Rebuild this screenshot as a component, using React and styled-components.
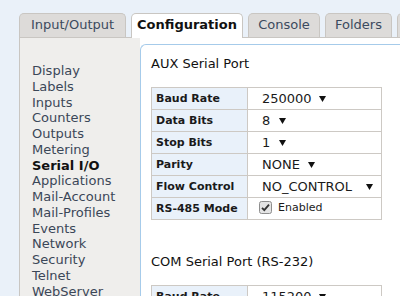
import React from 'react';
import styled, { createGlobalStyle } from 'styled-components';

const Global = createGlobalStyle`
  html, body { margin: 0; padding: 0; background: #eaf1f9; overflow: hidden; }
  body { width: 400px; height: 296px; font-family: "DejaVu Sans", Verdana, sans-serif; }
`;

const Page = styled.div`
  padding: 13px 0 0 19px;
  width: 440px;
`;

const TabBar = styled.div`
  display: flex;
  align-items: flex-end;
  gap: 5px;
  height: 24px;
`;

const Tab = styled.div`
  box-sizing: border-box;
  flex: none;
  width: ${p => p.$w}px;
  height: ${p => (p.$active ? 25 : 24)}px;
  margin-bottom: ${p => (p.$active ? -1 : 0)}px;
  position: ${p => (p.$active ? 'relative' : 'static')};
  z-index: ${p => (p.$active ? 1 : 0)};
  border: 1px solid #c9c6c2;
  border-bottom: none;
  border-radius: 5px 5px 0 0;
  background: ${p => (p.$active ? '#ffffff' : '#dddbd9')};
  color: ${p => (p.$active ? '#111111' : '#3b4a5e')};
  font-weight: ${p => (p.$active ? 'bold' : 'normal')};
  font-size: 13px;
  line-height: 22px;
  text-align: center;
  white-space: nowrap;
  overflow: hidden;
`;

const Body = styled.div`
  display: flex;
  border-top: 1px solid #c9c6c2;
  border-left: 1px solid #c9c6c2;
  background: #ffffff;
  height: 260px;
`;

const Sidebar = styled.div`
  width: 120px;
  flex: none;
  background: #efeeec;
  padding: 25px 0 0 12px;
  box-sizing: border-box;
`;

const NavItem = styled.div`
  font-size: 13px;
  line-height: 15.75px;
  color: ${p => (p.$active ? '#111111' : '#3b4758')};
  font-weight: ${p => (p.$active ? 'bold' : 'normal')};
  white-space: nowrap;
`;

const Main = styled.div`
  flex: 1;
  padding-top: 6px;
  background: #ffffff;
`;

const Panel = styled.div`
  height: 100%;
  box-sizing: border-box;
  border-top: 1px solid #a6cbea;
  border-left: 1px solid #a6cbea;
  border-top-left-radius: 6px;
  padding: 11px 0 0 10px;
`;

const Heading = styled.div`
  font-size: 13px;
  line-height: 16px;
  color: #111111;
  margin-bottom: ${p => p.$mb}px;
`;

const Table = styled.table`
  border-collapse: collapse;
  width: 231px;
  margin-bottom: 34px;
  table-layout: fixed;
`;

const Row = styled.tr`
  height: 22px;
`;

const Label = styled.td`
  width: 91px;
  padding: 0 0 0 4px;
  background: #e9f1fa;
  border: 1px solid #cdc9c4;
  font-size: 11px;
  font-weight: bold;
  color: #1a1a1a;
  white-space: nowrap;
`;

const Value = styled.td`
  padding: 0 0 0 14px;
  background: #ffffff;
  border: 1px solid #cdc9c4;
  font-size: 13px;
  color: #1a1a1a;
  white-space: nowrap;
`;

const Select = styled.span`
  display: inline-flex;
  align-items: center;
`;

const Arrow = styled.svg`
  margin-left: ${p => p.$gap}px;
  width: 7px;
  height: 6px;
`;

const Check = styled.span`
  display: inline-flex;
  align-items: center;
  gap: 6px;
  font-size: 11px;
  color: #1a1a1a;
  margin-left: -3px;
`;

const Box = styled.svg`
  width: 13px;
  height: 13px;
`;

const tabs = [
  { t: 'Input/Output', w: 107 },
  { t: 'Configuration', w: 112, active: true },
  { t: 'Console', w: 72 },
  { t: 'Folders', w: 67 },
  { t: '', w: 70 },
];

const nav = ['Display', 'Labels', 'Inputs', 'Counters', 'Outputs', 'Metering', 'Serial I/O', 'Applications', 'Mail-Account', 'Mail-Profiles', 'Events', 'Network', 'Security', 'Telnet', 'WebServer'];

const Sel = ({ v, gap }) => (
  <Select>
    {v}
    <Arrow $gap={gap} viewBox="0 0 7 6"><polygon points="0,0 7,0 3.5,6" fill="#111" /></Arrow>
  </Select>
);

export default function App() {
  return (
    <>
      <Global />
      <Page>
        <TabBar>
          {tabs.map((x, i) => (
            <Tab key={i} $w={x.w} $active={x.active}>{x.t}</Tab>
          ))}
        </TabBar>
        <Body>
          <Sidebar>
            {nav.map(n => (
              <NavItem key={n} $active={n === 'Serial I/O'}>{n}</NavItem>
            ))}
          </Sidebar>
          <Main>
            <Panel>
              <Heading $mb={15}>AUX Serial Port</Heading>
              <Table>
                <tbody>
                  <Row><Label>Baud Rate</Label><Value><Sel v="250000" gap={7} /></Value></Row>
                  <Row><Label>Data Bits</Label><Value><Sel v="8" gap={9} /></Value></Row>
                  <Row><Label>Stop Bits</Label><Value><Sel v="1" gap={9} /></Value></Row>
                  <Row><Label>Parity</Label><Value><Sel v="NONE" gap={8} /></Value></Row>
                  <Row><Label>Flow Control</Label><Value><Sel v="NO_CONTROL" gap={14} /></Value></Row>
                  <Row>
                    <Label>RS-485 Mode</Label>
                    <Value>
                      <Check>
                        <Box viewBox="0 0 13 13">
                          <rect x="0.5" y="0.5" width="12" height="12" rx="2" fill="#e4e4e4" stroke="#8e8e8e" />
                          <path d="M3 6.8 L5.3 9.2 L10 3.6" fill="none" stroke="#333" strokeWidth="1.8" />
                        </Box>
                        Enabled
                      </Check>
                    </Value>
                  </Row>
                </tbody>
              </Table>
              <Heading $mb={15}>COM Serial Port (RS-232)</Heading>
              <Table>
                <tbody>
                  <Row><Label>Baud Rate</Label><Value><Sel v="115200" gap={7} /></Value></Row>
                </tbody>
              </Table>
            </Panel>
          </Main>
        </Body>
      </Page>
    </>
  );
}
